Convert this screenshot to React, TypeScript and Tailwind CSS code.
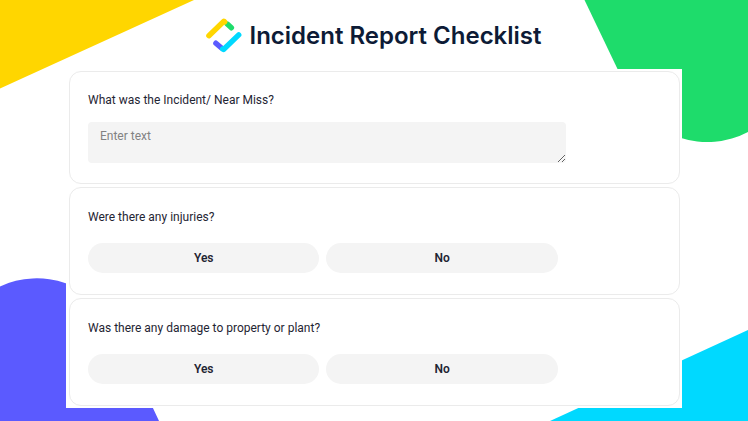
import { useState } from "react";

const Logo = () => {
    return (
        <svg className="shrink-0" width="36" height="36" viewBox="0 0 36 36" fill="none" strokeWidth="5.4" strokeLinecap="round" strokeLinejoin="round" aria-hidden="true">
            <path d="M21.3 6.1L25.4 9.8" stroke="#1edc6b" />
            <path d="M2.900 17.700L17.900 3.200L18.700 3.800" stroke="#ffd600" />
            <path d="M9.900 25.200L15.500 30" stroke="#5b5aff" />
            <path d="M32.700 16.900L17.500 31.500L16.700 31" stroke="#00d9ff" />
        </svg>
    );
};

const Background = () => {
    return (
        <div className="absolute inset-0 -z-10 overflow-hidden" aria-hidden="true">
            <svg className="absolute top-0 left-0" width="194" height="89">
                <path d="M0 0H194L0 88.500Z" fill="#ffd600" />
            </svg>
            <svg className="absolute top-0 right-0" width="164" height="143">
                <path d="M0.500 0H164V132A87 87 0 0 1 45 93Z" fill="#1edc6b" />
            </svg>
            <svg className="absolute bottom-0 left-0" width="160" height="143">
                <path d="M0 143V8.500A87 87 0 0 1 115 49L159 143Z" fill="#5b5aff" />
            </svg>
            <svg className="absolute right-0 bottom-0" width="198" height="92">
                <path d="M0 92L198 1V92Z" fill="#00d9ff" />
            </svg>
        </div>
    );
};

const YesNoCard = ({ question }: { question: string }) => {
    const [answer, setAnswer] = useState("");

    return (
        <fieldset className="rounded-xl border border-[#ebebeb] px-[18px] pt-[19px] pb-[21px]">
            <legend className="float-left w-full text-xs leading-5">{question}</legend>
            <div className="clear-both flex w-[82%] gap-[7px] pt-4">
                {["Yes", "No"].map((option) => (
                    <button
                        key={option}
                        type="button"
                        aria-pressed={answer === option}
                        onClick={() => setAnswer(option)}
                        className="h-[30px] flex-1 cursor-pointer rounded-full bg-[#f4f4f4] text-xs font-semibold aria-pressed:bg-[#e2e2e2]"
                    >
                        {option}
                    </button>
                ))}
            </div>
        </fieldset>
    );
};

const App = () => {
    return (
        <main className="relative isolate min-h-screen bg-white font-['Roboto',sans-serif] text-[#1f2533]">
            <Background />

            <header className="flex items-center justify-center gap-[7px] pt-[18px] pb-[15px]">
                <Logo />
                <h1 className="font-['Inter',sans-serif] text-2xl leading-9 font-semibold text-[#0d1b36]">Incident Report Checklist</h1>
            </header>

            <form className="mx-[66px] flex flex-col gap-[3px] bg-white pt-[2px] pr-[2px] pb-[2px] pl-[3px]">
                <div className="rounded-xl border border-[#ebebeb] px-[18px] pt-[18px] pb-5">
                    <label htmlFor="incident" className="block text-xs leading-5">What was the Incident/ Near Miss?</label>
                    <textarea
                        id="incident"
                        placeholder="Enter text"
                        className="mt-3 block h-[41px] w-5/6 rounded bg-[#f4f4f4] px-3 py-1 text-xs leading-5 placeholder:text-[#828282]"
                    />
                </div>

                <YesNoCard question="Were there any injuries?" />
                <YesNoCard question="Was there any damage to property or plant?" />
            </form>
        </main>
    );
};

export default App;
